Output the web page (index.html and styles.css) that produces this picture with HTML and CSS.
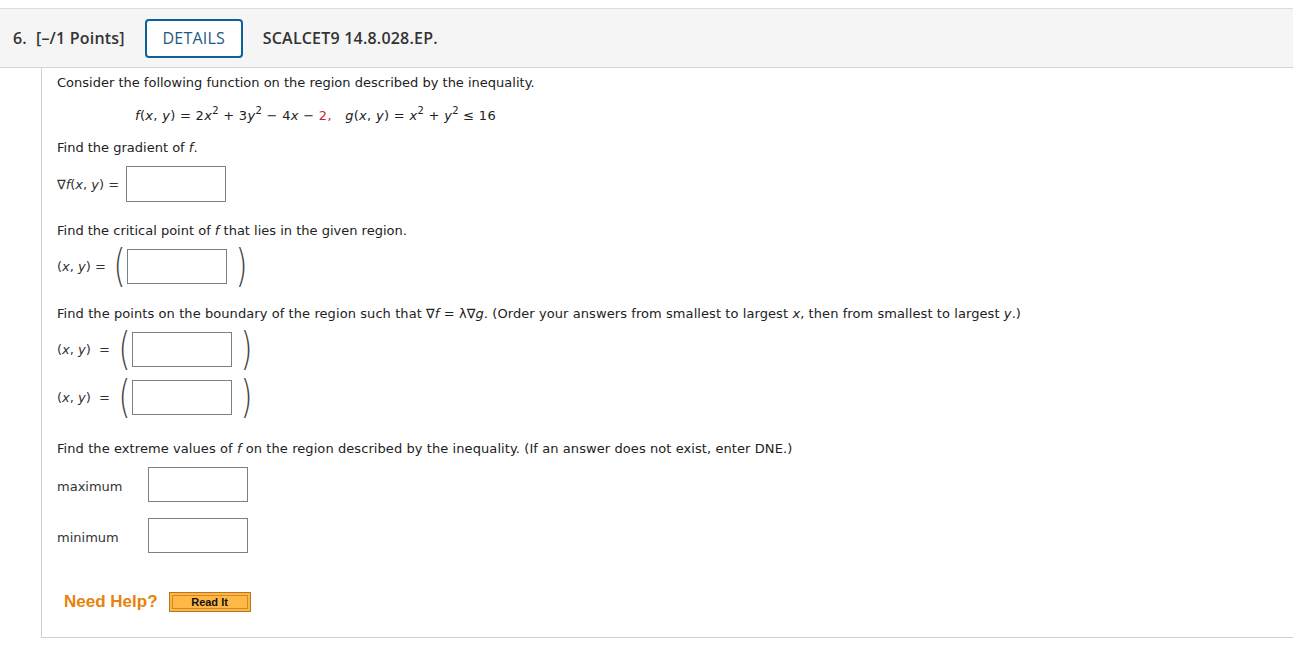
FILE: index.html
```html
<!DOCTYPE html>
<html>
<head>
<meta charset="utf-8">
<link rel="stylesheet" href="styles.css">
</head>
<body>
<div class="qhead">
  <span class="qnum">6.</span>
  <span class="qpts">[–/1 Points]</span>
  <button class="details">DETAILS</button>
  <span class="qcode">SCALCET9 14.8.028.EP.</span>
</div>
<div class="qbody">
  <p class="txt p-first">Consider the following function on the region described by the inequality.</p>
  <p class="formula"><i>f</i>(<i>x</i>, <i>y</i>) = 2<i>x</i><sup>2</sup> + 3<i>y</i><sup>2</sup> − 4<i>x</i> − <span class="red">2,</span>&nbsp;&nbsp; <i>g</i>(<i>x</i>, <i>y</i>) = <i>x</i><sup>2</sup> + <i>y</i><sup>2</sup> ≤ 16</p>
  <p class="txt p-grad">Find the gradient of <i>f</i>.</p>
  <div class="row r-grad"><span class="lbl">∇<i>f</i>(<i>x</i>, <i>y</i>) =</span><span class="box b-grad"></span></div>
  <p class="txt p-crit">Find the critical point of <i>f</i> that lies in the given region.</p>
  <div class="row r-crit"><span class="lbl l-crit">(<i>x</i>, <i>y</i>) =</span><span class="par">(</span><span class="box"></span><span class="par pr">)</span></div>
  <p class="txt p-bound">Find the points on the boundary of the region such that ∇<i>f</i> = λ∇<i>g</i>. (Order your answers from smallest to largest <i>x</i>, then from smallest to largest <i>y</i>.)</p>
  <div class="row r-b1"><span class="lbl l-b">(<i>x</i>, <i>y</i>)&nbsp; =</span><span class="par">(</span><span class="box"></span><span class="par pr2">)</span></div>
  <div class="row r-b2"><span class="lbl l-b">(<i>x</i>, <i>y</i>)&nbsp; =</span><span class="par">(</span><span class="box"></span><span class="par pr2">)</span></div>
  <p class="txt p-ext">Find the extreme values of <i>f</i> on the region described by the inequality. (If an answer does not exist, enter DNE.)</p>
  <div class="row r-max"><span class="lbl l-mm">maximum</span><span class="box"></span></div>
  <div class="row r-min"><span class="lbl l-mm">minimum</span><span class="box"></span></div>
  <div class="help"><span class="need">Need Help?</span><span class="readit"><span class="readit-in">Read It</span></span></div>
</div>
</body>
</html>
```
FILE: styles.css
```css
html, body { margin: 0; padding: 0; background: #fff; }
body { padding-top: 8px; font-family: Verdana, "DejaVu Sans", sans-serif; color: #222; }

.qhead {
  display: flex;
  align-items: center;
  height: 58px;
  background: #f5f5f5;
  border-top: 1px solid #dcdcdc;
  border-bottom: 1px solid #d6d6d6;
  font-family: "Open Sans", sans-serif;
  font-size: 16px;
  letter-spacing: 0.2px;
  color: #333;
}
.qnum { font-weight: 600; margin-left: 13px; }
.qpts { font-weight: 600; margin-left: 9px; }
.details {
  margin-left: 20px;
  width: 98px;
  height: 39px;
  border: 2px solid #0e6197;
  border-radius: 4px;
  background: #fff;
  font-family: "Open Sans", sans-serif;
  font-size: 16px;
  letter-spacing: 0.2px;
  color: #1d5786;
  padding: 0;
}
.qcode { font-weight: 600; margin-left: 20px; }

.qbody {
  margin-left: 41px;
  border-left: 1px solid #d0d0d0;
  border-bottom: 1px solid #cfcfcf;
  padding-left: 15px;
  padding-top: 7px;
  height: 562px;
  font-size: 13px;
  color: #222;
}
.txt { margin: 0; line-height: 16px; }
.p-first { margin-top: 0; }
.formula { margin: 17px 0 0 78px; line-height: 16px; letter-spacing: 0.3px; }
.formula sup { font-size: 10px; line-height: 0; vertical-align: 6px; }
.red { color: #cc1f1f; }
.p-grad { margin-top: 16px; }
.p-crit { margin-top: 21px; }
.p-bound { margin-top: 22px; letter-spacing: 0.08px; }
.p-ext { margin-top: 26px; letter-spacing: 0.08px; }

.row { display: flex; align-items: center; }
.lbl { color: #333; }
.box {
  display: inline-block;
  width: 98px;
  height: 33px;
  border: 1px solid #7f7f7f;
  background: #fff;
}
.r-grad { margin-top: 10px; }
.r-grad .lbl { width: 69px; }
.b-grad { height: 34px; }
.r-crit { margin-top: 9px; }
.l-crit { width: 54px; }
.par {
  font-family: "DejaVu Sans", sans-serif;
  font-weight: 200;
  font-size: 44px;
  line-height: 36px;
  color: #444;
  transform: scaleX(0.7);
  width: 16px;
  text-align: center;
}
.pr { margin-left: 6px; }
.pr2 { margin-left: 6px; }
.r-b1 { margin-top: 9px; }
.r-b2 { margin-top: 12px; }
.l-b { width: 59px; }
.r-max { margin-top: 10px; }
.r-min { margin-top: 16px; }
.l-mm { width: 91px; padding-top: 3px; }

.help { display: flex; align-items: center; margin-top: 39px; margin-left: 7px; }
.need {
  font-family: "Liberation Sans", Arial, sans-serif;
  font-weight: bold;
  font-size: 17px;
  color: #e8820c;
}
.readit {
  margin-left: 11px;
  width: 80px;
  height: 18px;
  border: 1px solid #b7752a;
  background: #ffb63e;
  display: flex;
  align-items: center;
  justify-content: center;
}
.readit-in {
  display: block;
  width: 74px;
  height: 12px;
  border: 1px solid #d08a2a;
  background: #ffb845;
  font-family: "Liberation Sans", Arial, sans-serif;
  font-weight: bold;
  font-size: 11px;
  line-height: 12px;
  text-align: center;
  color: #111;
}
```
